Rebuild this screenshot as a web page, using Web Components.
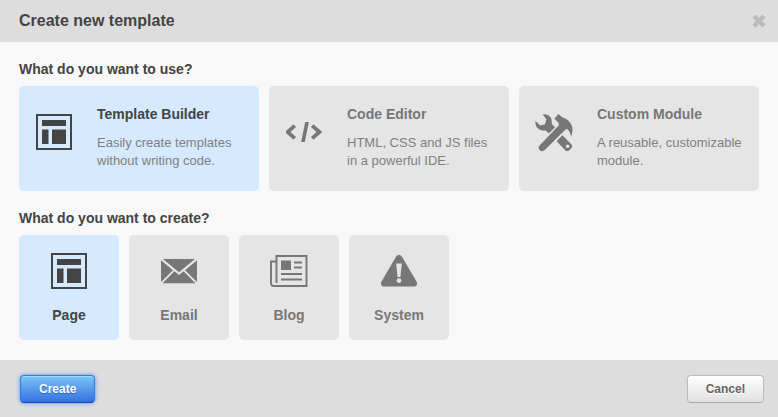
<!DOCTYPE html>
<html lang="en">
<head>
<meta charset="utf-8">
<title>Create new template</title>
<style>
  html, body { height: 100%; }
  body { margin: 0; background: #f8f8f8; font-family: "Liberation Sans", Arial, Helvetica, sans-serif; color: #444; }
</style>
</head>
<body>
<template-dialog heading="Create new template">
  <choice-group label="What do you want to use?" layout="wide">
    <choice-card layout="wide" icon="layout" label="Template Builder" selected>Easily create templates without writing code.</choice-card>
    <choice-card layout="wide" icon="code" label="Code Editor">HTML, CSS and JS files in a powerful IDE.</choice-card>
    <choice-card layout="wide" icon="tools" label="Custom Module">A reusable, customizable module.</choice-card>
  </choice-group>
  <choice-group label="What do you want to create?">
    <choice-card icon="layout" label="Page" selected></choice-card>
    <choice-card icon="mail" label="Email"></choice-card>
    <choice-card icon="news" label="Blog"></choice-card>
    <choice-card icon="warning" label="System"></choice-card>
  </choice-group>
  <action-button slot="actions" primary>Create</action-button>
  <action-button slot="actions">Cancel</action-button>
</template-dialog>

<script>
const ICONS = {
  layout: '<path d="M1 1H35V35H1Z" fill="none" stroke="currentColor" stroke-width="2"/><path d="M6 6H30V12H6ZM6 15.5H12.5V30H6ZM16 15.5H30V30H16Z"/>',
  code: '<path d="M8.8 11.6L1.6 18L8.8 24.4M26.2 11.6L33.4 18L26.2 24.4" fill="none" stroke="currentColor" stroke-width="3.8"/><path d="M19.2 8H22.9L18.8 28H15.1Z"/>',
  tools: '<path d="M7.7.5C12.5-.5 16.9 2.8 16.7 7.5C16.6 9 16.8 10 17.7 10.9L20 13.2L13.8 19.5L11.3 17C10.4 16.1 9.3 16.5 8 16.4C3 16 -.2 12 .4 7L5.4 11.4L10 10.2L11.4 5.2Z"/><path d="M23.4 0L27.2 3.3C31.4 4.4 35 7.3 36.6 11.3C38 14.7 37.8 18.6 36 22.7C35.6 19.2 34.2 16.5 31.8 14.8L29.8 16.2L10 35.8C8.2 37.6 6.2 37.6 4.8 36.2C3.2 34.6 3.2 33 4.8 31.2L23.9 11.2L23.6 8.7L19.3 4.7Z"/><path fill-rule="evenodd" d="M27.4 21.3L36 29.9C37.7 31.6 37.5 33.1 36 34.6L34.7 36C33.2 37.5 31.6 37.5 30 35.9L21.6 27.2ZM32.6 30.5A1.8 1.8 0 1 0 32.6 34.1A1.8 1.8 0 1 0 32.6 30.5Z"/>',
  mail: '<path d="M2 6H34L18 19.2ZM0 7.2L12 17.2L0 29ZM36 7.2L24 17.2L36 29ZM13.4 18.3L18 22L22.6 18.3L34.5 30.3H1.5Z"/>',
  news: '<path d="M5.5 28V1H35.5V31H3C1.3 31 0 30 0 28.2V6.5H5.5" fill="none" stroke="currentColor" stroke-width="1.9"/><path d="M10 5.5H20V15H10Z"/><path d="M23 7.5H31M23 12.5H31M10 19H31M10 24.5H31" fill="none" stroke="currentColor" stroke-width="1.8"/>',
  warning: '<path fill-rule="evenodd" d="M15 3.7C16.5 1.3 19.5 1.3 21 3.7L35.5 28.5C37 31.2 35.5 33.6 32.5 33.6H3.5C.5 33.6-1 31.2.5 28.5ZM15.1 10.5L16.6 24H19.4L20.9 10.5ZM18 25.2A2.4 2.4 0 1 0 18 30A2.4 2.4 0 1 0 18 25.2Z"/>'
};
const VIEW = { tools: '0 0 38 38', news: '-1 -2 38 38' };

class UiIcon extends HTMLElement {
  connectedCallback() {
    const name = this.getAttribute('name');
    this.attachShadow({ mode: 'open' }).innerHTML = `
      <style>
        :host { display: block; width: 36px; height: 36px; flex: none; }
        :host([name="tools"]), :host([name="news"]) { width: 38px; height: 38px; margin: 0 -1px -2px; }
        svg { display: block; width: 100%; height: 100%; fill: currentColor; }
      </style>
      <svg viewBox="${VIEW[name] || '0 0 36 36'}" aria-hidden="true">${ICONS[name]}</svg>`;
  }
}
customElements.define('ui-icon', UiIcon);

class ChoiceCard extends HTMLElement {
  static observedAttributes = ['selected'];
  connectedCallback() {
    const wide = this.getAttribute('layout') === 'wide';
    this.attachShadow({ mode: 'open' }).innerHTML = `
      <style>
        :host { display: block; width: 100px; }
        :host([layout="wide"]) { width: auto; min-width: 0; }
        button {
          box-sizing: border-box; width: 100%; height: 100%; min-height: 105px; margin: 0; padding: 18px 4px 14px;
          border: 0; border-radius: 5px; background: #e5e5e5; color: #777; font: inherit; cursor: pointer;
          display: flex; flex-direction: column; align-items: center; gap: 16px;
        }
        :host([layout="wide"]) button { flex-direction: row; align-items: flex-start; gap: 25px; padding: 18px 12px 18px 17px; text-align: left; }
        :host([layout="wide"]) ui-icon { margin-top: 10px; }
        :host([selected]) button { background: #d5e9ff; color: #444; }
        strong { display: block; font-size: 14px; line-height: 20px; }
        .note { display: block; margin-top: 10px; font-size: 13px; line-height: 18px; color: #808080; }
      </style>
      <button type="button">
        <ui-icon name="${this.getAttribute('icon')}"></ui-icon>
        <span><strong>${this.getAttribute('label')}</strong>${wide ? '<span class="note"><slot></slot></span>' : ''}</span>
      </button>`;
    this.attributeChangedCallback();
  }
  attributeChangedCallback() {
    this.shadowRoot?.querySelector('button').setAttribute('aria-pressed', this.hasAttribute('selected'));
  }
}
customElements.define('choice-card', ChoiceCard);

class ChoiceGroup extends HTMLElement {
  connectedCallback() {
    this.attachShadow({ mode: 'open' }).innerHTML = `
      <style>
        :host { display: block; }
        h2 { margin: 0 0 7px; font-size: 14px; line-height: 20px; font-weight: bold; }
        .cards { display: flex; flex-wrap: wrap; gap: 10px; }
        :host([layout="wide"]) .cards { display: grid; grid-template-columns: repeat(3, minmax(0, 1fr)); }
      </style>
      <h2 id="title">${this.getAttribute('label')}</h2>
      <div class="cards" role="group" aria-labelledby="title"><slot></slot></div>`;
    this.addEventListener('click', (e) => {
      const card = e.target.closest('choice-card');
      if (card) for (const c of this.children) c.toggleAttribute('selected', c === card);
    });
  }
}
customElements.define('choice-group', ChoiceGroup);

class ActionButton extends HTMLElement {
  connectedCallback() {
    this.attachShadow({ mode: 'open' }).innerHTML = `
      <style>
        :host { display: block; }
        button {
          display: block; margin: 0; padding: 5px 18px; border: 1px solid #bcbcbc; border-bottom-color: #aaa; border-radius: 4px;
          background: linear-gradient(#fff, #e0e0e0); color: #666; text-shadow: 0 1px 0 #fff;
          font: bold 12px/16px "Liberation Sans", Arial, sans-serif; cursor: pointer;
        }
        :host([primary]) button {
          border-color: #2b7de8; border-bottom-color: #1a45c4; color: #fff; text-shadow: 0 1px 1px #2a62ad;
          background: linear-gradient(#7cc4f4, #3371e3); box-shadow: inset 0 1px 0 #a4dafa, 0 0 4px #4b8ff0;
        }
      </style>
      <button type="button"><slot></slot></button>`;
  }
}
customElements.define('action-button', ActionButton);

class TemplateDialog extends HTMLElement {
  connectedCallback() {
    this.attachShadow({ mode: 'open' }).innerHTML = `
      <style>
        :host { display: flex; flex-direction: column; min-height: 100%; }
        header, footer { display: flex; align-items: center; justify-content: space-between; background: #ddd; }
        header { padding: 10px 12px 10px 19px; }
        h1 { margin: 0; font-size: 16px; line-height: 22px; }
        .close { display: block; margin: 0; padding: 0; border: 0; background: none; color: #bbb; cursor: pointer; }
        .close svg { display: block; width: 14px; height: 14px; }
        main { flex: 1; display: flex; flex-direction: column; gap: 17px; padding: 17px 19px 20px; }
        footer { padding: 15px 14px 14px 20px; }
      </style>
      <header>
        <h1>${this.getAttribute('heading')}</h1>
        <button class="close" type="button" aria-label="Close">
          <svg viewBox="0 0 14 14" aria-hidden="true"><path d="M2 2L12 12M12 2L2 12" stroke="currentColor" stroke-width="4.4"/></svg>
        </button>
      </header>
      <main><slot></slot></main>
      <footer><slot name="actions"></slot></footer>`;
  }
}
customElements.define('template-dialog', TemplateDialog);
</script>
</body>
</html>
